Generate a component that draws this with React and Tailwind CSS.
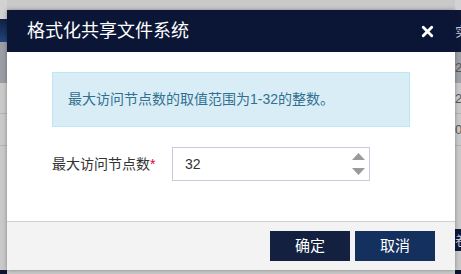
import { X } from 'lucide-react';

const font = { fontFamily: '"Liberation Sans", "Noto Sans CJK SC", sans-serif' };

function Spinner() {
  return (
    <div className="flex flex-col items-center gap-[8px] pr-[4px]">
      <svg width="13" height="7" viewBox="0 0 13 7"><polygon points="6.5,0 13,7 0,7" fill="#9a9a9a" /></svg>
      <svg width="13" height="7" viewBox="0 0 13 7"><polygon points="0,0 13,0 6.5,7" fill="#9a9a9a" /></svg>
    </div>
  );
}

export default function App() {
  return (
    <div className="relative w-[461px] h-[274px] overflow-hidden bg-[#c9c9c9]" style={font}>
      {/* dimmed page behind the dialog */}
      <div className="flex h-full justify-between">
        <div className="w-[7px] flex flex-col">
          <div className="h-[19px] bg-[#d2d2d2]" />
          <div className="h-[23px] bg-gradient-to-b from-[#102047] to-[#23457a]" />
          <div className="h-[41px] bg-[#9a9da5]" />
          <div className="h-[31px] border-b border-[#b3b3b3]" />
          <div className="h-[32px] border-b border-[#b3b3b3]" />
          <div className="flex-1" />
          <div className="h-[4px] bg-[#0c1530]" />
        </div>
        <div className="w-[6px] flex flex-col text-[13px] text-[#555] leading-none overflow-hidden">
          <div className="h-[10px] bg-[#d2d2d2]" />
          <div className="h-[42px] bg-[#0d1838] text-[#c8ccd8] flex items-center">实</div>
          <div className="h-[31px] bg-[#9ea1a8] flex items-center">2</div>
          <div className="h-[31px] border-b border-[#b3b3b3] flex items-center">2</div>
          <div className="h-[32px] border-b border-[#b3b3b3] flex items-center">0</div>
          <div className="h-[83px]" />
          <div className="h-[22px] bg-[#0d1838] text-[#c8ccd8] flex items-center">卷</div>
          <div className="flex-1" />
          <div className="h-[4px] bg-[#0c1530]" />
        </div>
      </div>

      {/* dialog */}
      <div className="absolute left-[7px] top-[10px] w-[448px] flex flex-col bg-white shadow-[0_0_4px_rgba(0,0,0,0.35)]">
        <div className="h-[42px] bg-[#0b1637] flex items-center justify-between pl-[20px] pr-[19px]">
          <span className="text-white text-[18px]">格式化共享文件系统</span>
          <X size={17} strokeWidth={4} className="text-white" />
        </div>

        <div className="h-[169px] px-[45px] pt-[20px]">
          <div className="h-[55px] bg-[#d9edf7] border border-[#bce8f1] flex items-center pl-[15px] text-[14px] text-[#31708f]">
            最大访问节点数的取值范围为1-32的整数。
          </div>
          <div className="flex items-center mt-[20px]">
            <label className="w-[120px] text-[14px] text-[#333]">
              最大访问节点数<span className="text-[#e4002b]">*</span>
            </label>
            <div className="w-[198px] h-[34px] border border-[#c9c9db] flex items-center justify-between pl-[12px]">
              <span className="text-[14px] text-[#333]">32</span>
              <Spinner />
            </div>
          </div>
        </div>

        <div className="h-[49px] border-t border-[#cfcfdb] bg-[#f3f3f3] flex justify-end gap-[5px] pr-[20px] pt-[9px]">
          <button className="w-[80px] h-[30px] bg-[#14203f] text-white text-[15px]">确定</button>
          <button className="w-[80px] h-[30px] bg-[#13305f] text-white text-[15px]">取消</button>
        </div>
      </div>
    </div>
  );
}
